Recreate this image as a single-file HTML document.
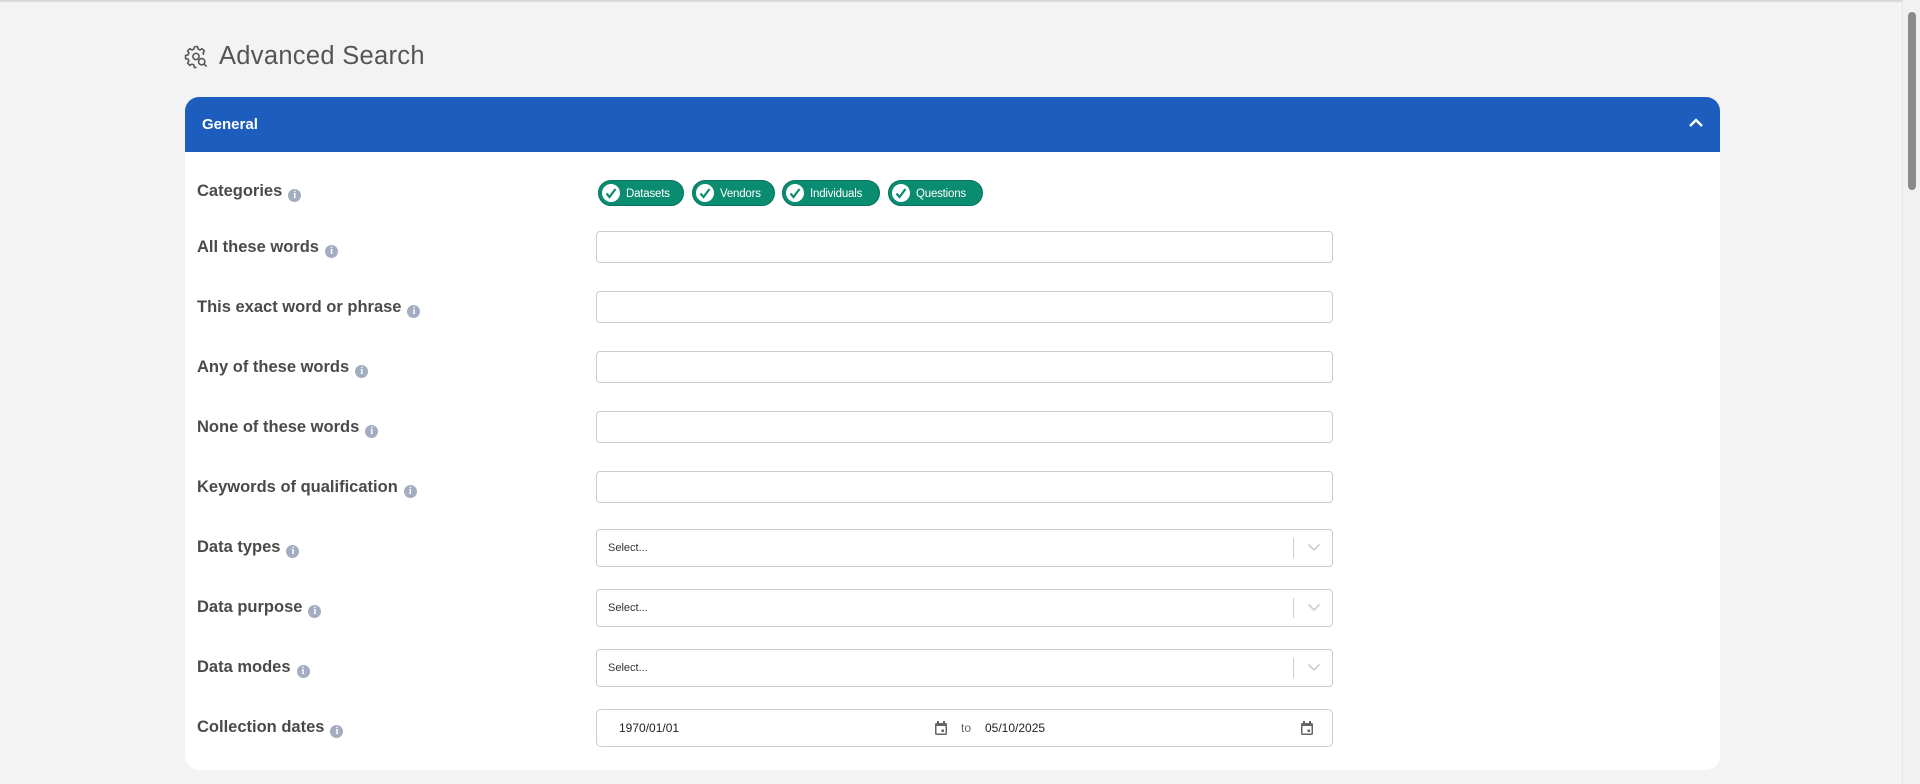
<!DOCTYPE html>
<html><head><meta charset="utf-8"><style>
*{box-sizing:border-box;margin:0;padding:0}
body{width:1920px;height:784px;overflow:hidden;background:#f3f3f3;font-family:"Liberation Sans",Arial,sans-serif;position:relative}
.topsh{position:absolute;top:0;left:0;width:1902px;height:3px;background:linear-gradient(#cfcfcf,#f3f3f3)}
.sb{position:absolute;right:0;top:0;width:18px;height:784px;background:#f1f1f1;border-left:1px solid #e6e6e6}
.sb div{position:absolute;left:5px;top:12px;width:8px;height:178px;background:#8a8a8a;border-radius:4px}
.title{position:absolute;left:184px;top:42px;display:flex;align-items:center;color:#555;font-size:25.5px;font-weight:300}
.title span{margin-left:10px;letter-spacing:.3px}
.card{position:absolute;left:185px;top:97px;width:1535px;height:673px;background:#fff;border-radius:14px;overflow:hidden}
.hdr{height:55px;background:#1c5dbd;color:#fff;font-size:15px;font-weight:bold;padding-left:17px;line-height:55px;position:relative}
.hdr svg{position:absolute;right:16px;top:20px}
.lbl{position:absolute;left:197px;font-size:16.5px;font-weight:bold;color:#4a4a4a;transform:translateY(-50%);margin-top:1px}
.i{display:inline-block;width:13px;height:13px;border-radius:50%;background:#a3adc2;color:#fff;font-size:10px;line-height:13px;text-align:center;vertical-align:-2px;margin-left:6px;font-weight:bold;font-family:"Liberation Serif",serif}
.inp{position:absolute;left:596px;width:737px;height:32px;border:1px solid #ccc;border-radius:4px;background:#fff}
.sel{position:absolute;left:596px;width:737px;height:38px;border:1px solid #ccc;border-radius:4px;background:#fff;font-size:11px;color:#333;padding-left:11px;line-height:36px}
.sel .bar{position:absolute;right:38px;top:8px;width:1px;height:20px;background:#ccc}
.sel svg{position:absolute;right:11px;top:13px}
.chip{position:absolute;top:180px;height:26px;background:#0a8c70;border-radius:13px;color:#fff;font-size:11.5px;letter-spacing:-.2px;line-height:26px;padding-left:27px;border:1px solid #07745c}
.chip:before{content:"";position:absolute;left:3px;top:3px;width:18px;height:18px;border-radius:50%;background:#fff}
.chip svg{position:absolute;left:6px;top:7px}
.date{position:absolute;left:596px;top:709px;width:737px;height:38px;border:1px solid #ccc;border-radius:5px;font-size:12px;color:#222;line-height:36px}
</style></head><body>
<div class="topsh"></div>
<div class="title"><svg width="25" height="25" viewBox="0 0 24 24" fill="none" stroke="#555" stroke-width="1.5"><path d="M10 2.5h3l.5 2.3 1.8.9 2.1-1.2 2.1 2.1-1.2 2.1.7 1.6"/><path d="M10 2.5l-.5 2.3-1.8.9-2.1-1.2-2.1 2.1 1.2 2.1-.9 1.8-2.3.5v3l2.3.5.9 1.8-1.2 2.1 2.1 2.1 2.1-1.2 1.8.9.5 2.3h2"/><circle cx="11.5" cy="12" r="3"/><circle cx="17" cy="17" r="3"/><path d="M19.2 19.2l2.5 2.5"/></svg><span>Advanced Search</span></div>
<div class="card"><div class="hdr">General<svg width="16" height="11" viewBox="0 0 16 11"><path d="M2 9l6-6 6 6" stroke="#fff" stroke-width="2.4" fill="none"/></svg></div></div>

<div class="lbl" style="top:191px">Categories<span class="i">i</span></div>
<div class="chip" style="left:598px;width:86px"><svg width="12" height="11" viewBox="0 0 12 11"><path d="M1.5 5.5l3 3.5 6-8" stroke="#0a8c70" stroke-width="2.2" fill="none"/></svg>Datasets</div>
<div class="chip" style="left:692px;width:83px"><svg width="12" height="11" viewBox="0 0 12 11"><path d="M1.5 5.5l3 3.5 6-8" stroke="#0a8c70" stroke-width="2.2" fill="none"/></svg>Vendors</div>
<div class="chip" style="left:782px;width:98px"><svg width="12" height="11" viewBox="0 0 12 11"><path d="M1.5 5.5l3 3.5 6-8" stroke="#0a8c70" stroke-width="2.2" fill="none"/></svg>Individuals</div>
<div class="chip" style="left:888px;width:95px"><svg width="12" height="11" viewBox="0 0 12 11"><path d="M1.5 5.5l3 3.5 6-8" stroke="#0a8c70" stroke-width="2.2" fill="none"/></svg>Questions</div>

<div class="lbl" style="top:247px">All these words<span class="i">i</span></div><div class="inp" style="top:231px"></div>
<div class="lbl" style="top:307px">This exact word or phrase<span class="i">i</span></div><div class="inp" style="top:291px"></div>
<div class="lbl" style="top:367px">Any of these words<span class="i">i</span></div><div class="inp" style="top:351px"></div>
<div class="lbl" style="top:427px">None of these words<span class="i">i</span></div><div class="inp" style="top:411px"></div>
<div class="lbl" style="top:487px">Keywords of qualification<span class="i">i</span></div><div class="inp" style="top:471px"></div>

<div class="lbl" style="top:547px">Data types<span class="i">i</span></div>
<div class="sel" style="top:529px">Select...<div class="bar"></div><svg width="14" height="9" viewBox="0 0 14 9"><path d="M1.5 1.5l5.5 5.5 5.5-5.5" stroke="#ccc" stroke-width="1.6" fill="none"/></svg></div>
<div class="lbl" style="top:607px">Data purpose<span class="i">i</span></div>
<div class="sel" style="top:589px">Select...<div class="bar"></div><svg width="14" height="9" viewBox="0 0 14 9"><path d="M1.5 1.5l5.5 5.5 5.5-5.5" stroke="#ccc" stroke-width="1.6" fill="none"/></svg></div>
<div class="lbl" style="top:667px">Data modes<span class="i">i</span></div>
<div class="sel" style="top:649px">Select...<div class="bar"></div><svg width="14" height="9" viewBox="0 0 14 9"><path d="M1.5 1.5l5.5 5.5 5.5-5.5" stroke="#ccc" stroke-width="1.6" fill="none"/></svg></div>

<div class="lbl" style="top:727px">Collection dates<span class="i">i</span></div>
<div class="date">
<span style="position:absolute;left:22px">1970/01/01</span>
<svg style="position:absolute;left:337px;top:10px" width="14" height="16" viewBox="0 0 14 16"><rect x="1" y="3" width="12" height="12" rx="1.5" fill="#666"/><rect x="2.5" y="6" width="9" height="7.5" fill="#fff"/><rect x="3" y="1" width="2" height="3" fill="#666"/><rect x="9" y="1" width="2" height="3" fill="#666"/><rect x="7.5" y="9.5" width="2.5" height="2.5" fill="#666"/></svg>
<span style="position:absolute;left:364px;color:#666">to</span>
<span style="position:absolute;left:388px">05/10/2025</span>
<svg style="position:absolute;left:703px;top:10px" width="14" height="16" viewBox="0 0 14 16"><rect x="1" y="3" width="12" height="12" rx="1.5" fill="#666"/><rect x="2.5" y="6" width="9" height="7.5" fill="#fff"/><rect x="3" y="1" width="2" height="3" fill="#666"/><rect x="9" y="1" width="2" height="3" fill="#666"/><rect x="7.5" y="9.5" width="2.5" height="2.5" fill="#666"/></svg>
</div>
<div class="sb"><div></div></div>
</body></html>
